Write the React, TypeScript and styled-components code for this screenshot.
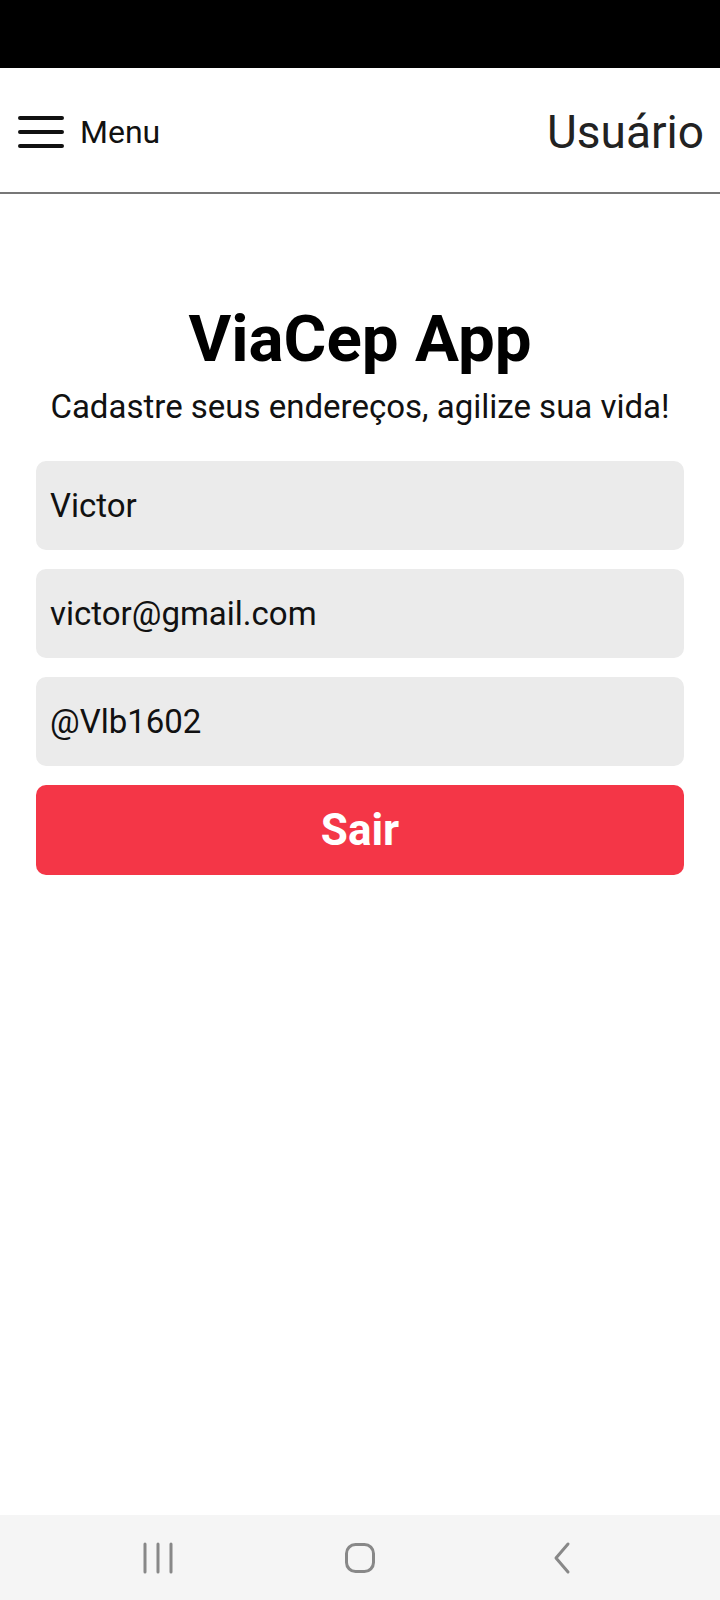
import styled, { createGlobalStyle } from "styled-components";

const GlobalStyle = createGlobalStyle`
  html, body {
    margin: 0;
    padding: 0;
    background: #ffffff;
  }

  body {
    font-family: Roboto, "Noto Sans", sans-serif;
    color: #111111;
  }
`;

const fields = [
  { id: 0, value: "Victor" },
  { id: 1, value: "victor@gmail.com" },
  { id: 2, value: "@Vlb1602" },
];

function App() {
  return (
    <>
      <GlobalStyle />
      <Screen>
        <StatusBar />

        <Header>
          <MenuButton>
            <HamburgerIcon />
            <MenuLabel>Menu</MenuLabel>
          </MenuButton>
          <PageTitle>Usuário</PageTitle>
        </Header>

        <Main>
          <Title>ViaCep App</Title>
          <Subtitle>Cadastre seus endereços, agilize sua vida!</Subtitle>

          <Form>
            {fields.map((field) => (
              <Input key={field.id} defaultValue={field.value} />
            ))}
            <LogoutButton type="button">Sair</LogoutButton>
          </Form>
        </Main>

        <NavBar>
          <NavIcon width="40" height="40" viewBox="0 0 40 40">
            <path d="M7 6v28M20 6v28M33 6v28" />
          </NavIcon>
          <NavIcon width="40" height="40" viewBox="0 0 40 40">
            <rect x="6.5" y="6.5" width="27" height="27" rx="9" />
          </NavIcon>
          <NavIcon width="40" height="40" viewBox="0 0 40 40">
            <path d="M26 6L14 20l12 14" />
          </NavIcon>
        </NavBar>
      </Screen>
    </>
  );
}

function HamburgerIcon() {
  return (
    <svg width="46" height="34" viewBox="0 0 46 34">
      <g stroke="#111111" strokeWidth="4" strokeLinecap="round">
        <path d="M2 3h42M2 17h42M2 31h42" />
      </g>
    </svg>
  );
}

export default App;

const Screen = styled.div`
  display: flex;
  flex-direction: column;
  width: 720px;
  height: 1600px;
  overflow: hidden;
`;

const StatusBar = styled.div`
  height: 68px;
  background: #000000;
`;

const Header = styled.header`
  display: flex;
  align-items: center;
  justify-content: space-between;
  box-sizing: border-box;
  height: 126px;
  padding: 4px 16px 0 18px;
  border-bottom: 2px solid #777777;
`;

const MenuButton = styled.div`
  display: flex;
  align-items: center;
  gap: 16px;
`;

const MenuLabel = styled.span`
  font-size: 32px;
  color: #111111;
`;

const PageTitle = styled.span`
  font-size: 46px;
  color: #222222;
`;

const Main = styled.main`
  flex: 1;
  display: flex;
  flex-direction: column;
  align-items: center;
  padding: 106px 36px 0;
`;

const Title = styled.h1`
  margin: 0;
  font-size: 65.5px;
  font-weight: 700;
  color: #000000;
`;

const Subtitle = styled.p`
  margin: 10px 0 0;
  font-size: 33px;
  color: #111111;
`;

const Form = styled.div`
  display: flex;
  flex-direction: column;
  gap: 19px;
  width: 100%;
  margin-top: 35px;
`;

const Input = styled.input`
  box-sizing: border-box;
  width: 100%;
  height: 89px;
  padding: 0 14px;
  border: none;
  border-radius: 10px;
  background: #ebebeb;
  font-family: Roboto, "Noto Sans", sans-serif;
  font-size: 33px;
  color: #111111;
  outline: none;
`;

const LogoutButton = styled.button`
  height: 90px;
  border: none;
  border-radius: 10px;
  background: #f43647;
  font-family: Roboto, "Noto Sans", sans-serif;
  font-size: 44px;
  font-weight: 700;
  color: #ffffff;
`;

const NavBar = styled.nav`
  display: flex;
  align-items: center;
  justify-content: center;
  gap: 162px;
  height: 85px;
  background: #f5f5f5;
`;

const NavIcon = styled.svg`
  fill: none;
  stroke: #888888;
  stroke-width: 3;
  stroke-linecap: round;
  stroke-linejoin: round;
`;
